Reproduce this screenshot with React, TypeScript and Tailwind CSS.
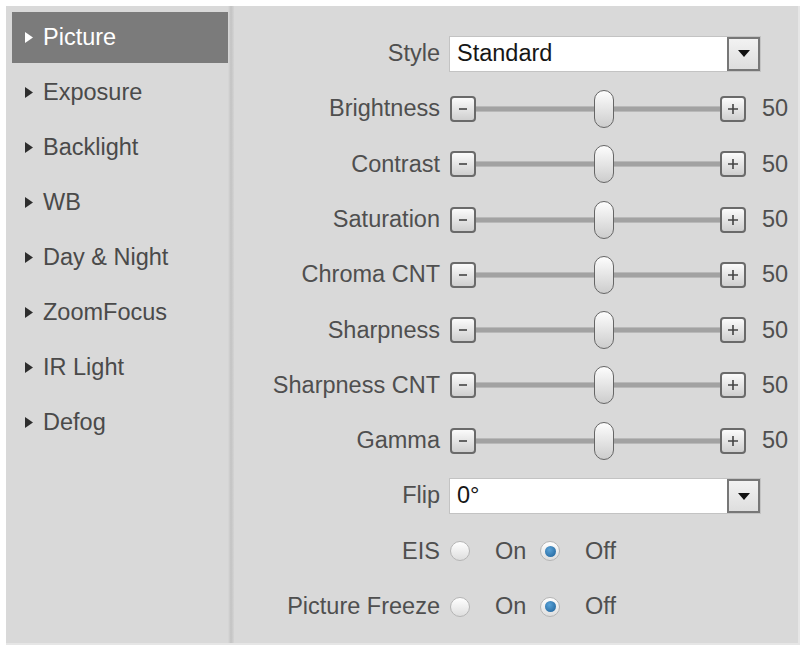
import { useState } from 'react';

const menu = ['Picture', 'Exposure', 'Backlight', 'WB', 'Day & Night', 'ZoomFocus', 'IR Light', 'Defog'];

const sliders = [
  'Brightness',
  'Contrast',
  'Saturation',
  'Chroma CNT',
  'Sharpness',
  'Sharpness CNT',
  'Gamma',
];

function Arrow({ active }: { active: boolean }) {
  return (
    <svg width="8" height="11" viewBox="0 0 8 11" className="shrink-0">
      <path d="M0 0 L8 5.5 L0 11 Z" fill={active ? '#ffffff' : '#2e2e2e'} />
    </svg>
  );
}

function Label({ children }: { children: string }) {
  return <div className="w-[206px] shrink-0 text-right whitespace-nowrap text-[#4f4f4f]">{children}</div>;
}

function Select({ value }: { value: string }) {
  return (
    <div className="ml-[9px] flex h-[36px] w-[312px] border border-[#c3c3c3] bg-white">
      <div className="flex flex-1 items-center pl-[7px] text-[#161616]">{value}</div>
      <div className="flex w-[33px] items-center justify-center border-2 border-[#777] bg-linear-to-b from-[#f2f2f2] to-[#dedede]">
        <svg width="12" height="7" viewBox="0 0 12 7">
          <path d="M0 0 H12 L6 7 Z" fill="#111" />
        </svg>
      </div>
    </div>
  );
}

function StepButton({ plus }: { plus?: boolean }) {
  return (
    <div className="flex h-[26px] w-[26px] shrink-0 items-center justify-center rounded-[4px] border-2 border-[#6a6a6a] bg-linear-to-b from-[#fbfbfb] to-[#cfcfcf]">
      <svg width="14" height="14" viewBox="0 0 14 14">
        <path d={plus ? 'M2 7 H12 M7 2 V12' : 'M3 7 H11'} stroke="#444" strokeWidth="1.6" />
      </svg>
    </div>
  );
}

function Slider({ value }: { value: number }) {
  return (
    <div className="ml-[10px] flex items-center">
      <StepButton />
      <div className="relative h-[26px] w-[244px]">
        <div className="absolute left-0 right-0 top-[10px] h-[6px] border-y border-[#b9b9b9] bg-[#a2a2a2]" />
        <div
          className="absolute top-[-6px] h-[38px] w-[20px] rounded-full border-[1.5px] border-[#666] bg-linear-to-b from-[#fdfdfd] to-[#cdcdcd]"
          style={{ left: `${(value / 100) * 235}px` }}
        />
      </div>
      <StepButton plus />
      <div className="ml-[16px] text-[#4f4f4f]">{value}</div>
    </div>
  );
}

function Radio({ checked }: { checked: boolean }) {
  return (
    <div className="flex h-[20px] w-[20px] shrink-0 items-center justify-center rounded-full border border-[#b5b5b5] bg-linear-to-b from-[#ffffff] to-[#dedede]">
      {checked ? (
        <div className="h-[11px] w-[11px] rounded-full bg-radial-[at_40%_35%] from-[#5aa3d8] to-[#1d5f96]" />
      ) : null}
    </div>
  );
}

function OnOff({ on }: { on: boolean }) {
  return (
    <div className="ml-[10px] flex items-center text-[#4f4f4f]">
      <Radio checked={on} />
      <span className="ml-[25px] w-[45px]">On</span>
      <Radio checked={!on} />
      <span className="ml-[25px]">Off</span>
    </div>
  );
}

export default function App() {
  const [active] = useState(0);

  return (
    <div className="h-[648px] w-[804px] bg-white pl-[6px] pt-[6px] font-['Liberation_Sans',Arial,sans-serif] text-[23.5px]">
      <div className="flex h-[639px] w-[794px] border-b-2 border-r-2 border-[#e6e6e6] bg-[#d9d9d9]">
        <aside className="flex w-[222px] shrink-0 flex-col gap-[4px] pl-[6px] pt-[6px]">
          {menu.map((item, i) => (
            <div
              key={item}
              className={`flex h-[51px] items-center pl-[13px] ${
                i === active ? 'bg-[#7b7b7b] text-white' : 'text-[#4a4a4a]'
              }`}
            >
              <Arrow active={i === active} />
              <span className="ml-[10px] whitespace-nowrap">{item}</span>
            </div>
          ))}
        </aside>

        <div className="w-[6px] shrink-0 bg-linear-to-r from-[#d9d9d9] via-[#c3c3c3] to-[#d4d4d4]" />

        <main className="flex-1 pt-[20px]">
          <div className="flex h-[55.3px] items-center">
            <Label>Style</Label>
            <Select value="Standard" />
          </div>
          {sliders.map((name) => (
            <div key={name} className="flex h-[55.3px] items-center">
              <Label>{name}</Label>
              <Slider value={50} />
            </div>
          ))}
          <div className="flex h-[55.3px] items-center">
            <Label>Flip</Label>
            <Select value="0°" />
          </div>
          <div className="flex h-[55.3px] items-center">
            <Label>EIS</Label>
            <OnOff on={false} />
          </div>
          <div className="flex h-[55.3px] items-center">
            <Label>Picture Freeze</Label>
            <OnOff on={false} />
          </div>
        </main>
      </div>
    </div>
  );
}
